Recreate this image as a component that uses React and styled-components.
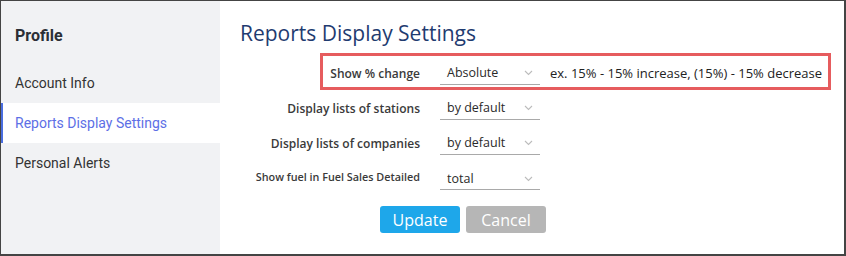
import styled, { createGlobalStyle } from "styled-components";

const GlobalStyle = createGlobalStyle`
	body {
		margin: 0;
		background: #ffffff;
	}
	* {
		box-sizing: border-box;
	}
`;

const menuItems = [
	{ label: "Account Info" },
	{ label: "Reports Display Settings", active: true },
	{ label: "Personal Alerts" },
];

const rows = [
	{ label: "Show % change", value: "Absolute", hint: "ex. 15% - 15% increase, (15%) - 15% decrease" },
	{ label: "Display lists of stations", value: "by default" },
	{ label: "Display lists of companies", value: "by default" },
	{ label: "Show fuel in Fuel Sales Detailed", value: "total", small: true },
];

function Chevron() {
	return (
		<svg width="9" height="6" viewBox="0 0 9 6">
			<path d="M1 1 L4.5 4.5 L8 1" fill="none" stroke="#bcbcbc" strokeWidth="1.1" />
		</svg>
	);
}

export default function App() {
	return (
		<>
			<GlobalStyle />
			<Frame>
				<Sidebar>
					<SideTitle>Profile</SideTitle>
					{menuItems.map((item) => (
						<MenuItem key={item.label} $active={item.active}>
							{item.label}
						</MenuItem>
					))}
				</Sidebar>
				<Main>
					<Title>Reports Display Settings</Title>
					<Form>
						<Highlight />
						{rows.map((row) => (
							<Row key={row.label}>
								<Label $small={row.small}>{row.label}</Label>
								<Select $low={row.small}>
									<span>{row.value}</span>
									<Chevron />
								</Select>
								{row.hint && <Hint>{row.hint}</Hint>}
							</Row>
						))}
						<Buttons>
							<Button $color="#1ea7ea">Update</Button>
							<Button $color="#b6b6b6">Cancel</Button>
						</Buttons>
					</Form>
				</Main>
			</Frame>
		</>
	);
}

const Frame = styled.div`
	display: flex;
	width: 846px;
	height: 256px;
	border: 1px solid #444444;
	border-right-width: 2px;
	border-bottom-width: 2px;
	overflow: hidden;
`;

const Sidebar = styled.div`
	width: 219px;
	flex-shrink: 0;
	background-color: #f1f2f4;
	font-family: Roboto, "Liberation Sans", sans-serif;
`;

const SideTitle = styled.div`
	padding: 25px 14px 17px;
	font-size: 16px;
	line-height: 20px;
	font-weight: 700;
	color: #2b2f36;
`;

const MenuItem = styled.div`
	height: 40px;
	display: flex;
	align-items: center;
	padding-left: 12px;
	font-size: 14px;
	color: ${(p) => (p.$active ? "#5d6fe6" : "#333333")};
	background-color: ${(p) => (p.$active ? "#ffffff" : "transparent")};
	border-left: 2px solid ${(p) => (p.$active ? "#4a6ee0" : "transparent")};
`;

const Main = styled.div`
	flex: 1;
	padding: 18px 0 0 20px;
	font-family: "Open Sans", "Liberation Sans", sans-serif;
`;

const Title = styled.h1`
	margin: 0;
	font-size: 21px;
	line-height: 28px;
	font-weight: 400;
	color: #1f3b70;
`;

const Form = styled.div`
	position: relative;
	margin-top: 14px;
	margin-left: 1px;
	display: flex;
	flex-direction: column;
	gap: 11px;
`;

const Highlight = styled.div`
	position: absolute;
	top: -8px;
	left: 79px;
	width: 511px;
	height: 37px;
	border: 3px solid #e65c5e;
	pointer-events: none;
`;

const Row = styled.div`
	display: flex;
	align-items: center;
	height: 24px;
`;

const Label = styled.div`
	width: 179px;
	margin-right: 20px;
	text-align: right;
	font-size: ${(p) => (p.$small ? "10.8px" : "12px")};
	font-weight: 600;
	color: #3a3a3a;
	position: relative;
	top: ${(p) => (p.$small ? "-2px" : "0")};
`;

const Select = styled.div`
	width: 100px;
	height: 24px;
	display: flex;
	align-items: center;
	justify-content: space-between;
	padding: ${(p) => (p.$low ? "2px" : "0")} 7px 0 7px;
	border-bottom: 1px solid #a9a9a9;
	font-size: 12.5px;
	color: #2a2a2a;
`;

const Hint = styled.div`
	margin-left: 10px;
	font-size: 13px;
	color: #222222;
	white-space: nowrap;
`;

const Buttons = styled.div`
	display: flex;
	gap: 6px;
	padding-left: 139px;
	margin-top: 5px;
`;

const Button = styled.button`
	width: 80px;
	height: 27px;
	border: none;
	border-radius: 3px;
	background-color: ${(p) => p.$color};
	color: #ffffff;
	font-family: "Open Sans", "Liberation Sans", sans-serif;
	font-size: 16px;
	padding: 0;
	cursor: pointer;
`;
